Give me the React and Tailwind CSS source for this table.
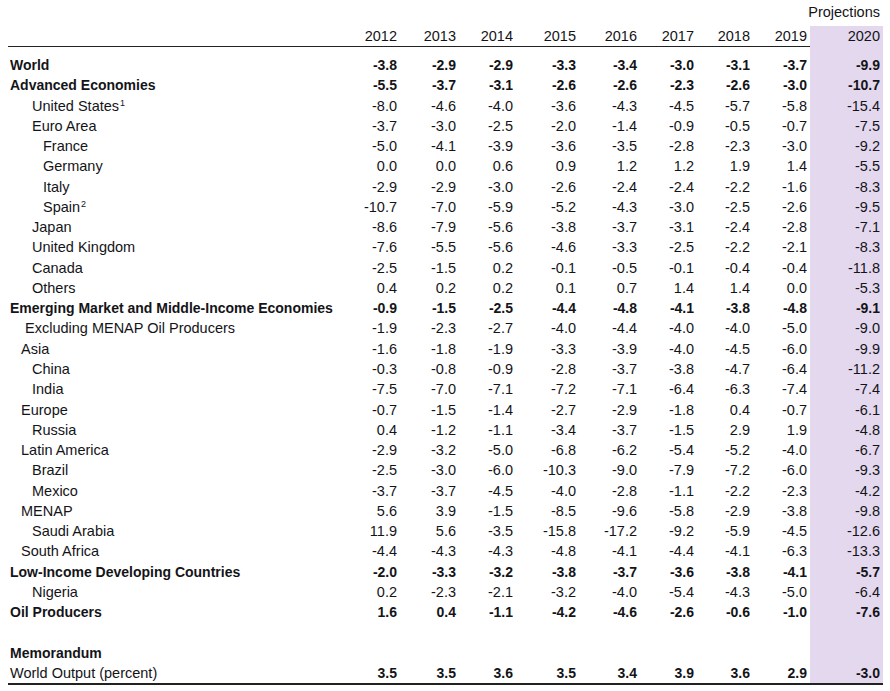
import React from "react";

const rows = [
  { label: "World", pad: "pl-[2px]", bold: true, v: ["-3.8", "-2.9", "-2.9", "-3.3", "-3.4", "-3.0", "-3.1", "-3.7", "-9.9"] },
  { label: "Advanced Economies", pad: "pl-[2px]", bold: true, v: ["-5.5", "-3.7", "-3.1", "-2.6", "-2.6", "-2.3", "-2.6", "-3.0", "-10.7"] },
  { label: "United States", sup: "1", pad: "pl-[24px]", v: ["-8.0", "-4.6", "-4.0", "-3.6", "-4.3", "-4.5", "-5.7", "-5.8", "-15.4"] },
  { label: "Euro Area", pad: "pl-[24px]", v: ["-3.7", "-3.0", "-2.5", "-2.0", "-1.4", "-0.9", "-0.5", "-0.7", "-7.5"] },
  { label: "France", pad: "pl-[35px]", v: ["-5.0", "-4.1", "-3.9", "-3.6", "-3.5", "-2.8", "-2.3", "-3.0", "-9.2"] },
  { label: "Germany", pad: "pl-[35px]", v: ["0.0", "0.0", "0.6", "0.9", "1.2", "1.2", "1.9", "1.4", "-5.5"] },
  { label: "Italy", pad: "pl-[35px]", v: ["-2.9", "-2.9", "-3.0", "-2.6", "-2.4", "-2.4", "-2.2", "-1.6", "-8.3"] },
  { label: "Spain", sup: "2", pad: "pl-[35px]", v: ["-10.7", "-7.0", "-5.9", "-5.2", "-4.3", "-3.0", "-2.5", "-2.6", "-9.5"] },
  { label: "Japan", pad: "pl-[24px]", v: ["-8.6", "-7.9", "-5.6", "-3.8", "-3.7", "-3.1", "-2.4", "-2.8", "-7.1"] },
  { label: "United Kingdom", pad: "pl-[24px]", v: ["-7.6", "-5.5", "-5.6", "-4.6", "-3.3", "-2.5", "-2.2", "-2.1", "-8.3"] },
  { label: "Canada", pad: "pl-[24px]", v: ["-2.5", "-1.5", "0.2", "-0.1", "-0.5", "-0.1", "-0.4", "-0.4", "-11.8"] },
  { label: "Others", pad: "pl-[24px]", v: ["0.4", "0.2", "0.2", "0.1", "0.7", "1.4", "1.4", "0.0", "-5.3"] },
  { label: "Emerging Market and Middle-Income Economies", pad: "pl-[2px]", bold: true, v: ["-0.9", "-1.5", "-2.5", "-4.4", "-4.8", "-4.1", "-3.8", "-4.8", "-9.1"] },
  { label: "Excluding MENAP Oil Producers", pad: "pl-[17px]", v: ["-1.9", "-2.3", "-2.7", "-4.0", "-4.4", "-4.0", "-4.0", "-5.0", "-9.0"] },
  { label: "Asia", pad: "pl-[13px]", v: ["-1.6", "-1.8", "-1.9", "-3.3", "-3.9", "-4.0", "-4.5", "-6.0", "-9.9"] },
  { label: "China", pad: "pl-[24px]", v: ["-0.3", "-0.8", "-0.9", "-2.8", "-3.7", "-3.8", "-4.7", "-6.4", "-11.2"] },
  { label: "India", pad: "pl-[24px]", v: ["-7.5", "-7.0", "-7.1", "-7.2", "-7.1", "-6.4", "-6.3", "-7.4", "-7.4"] },
  { label: "Europe", pad: "pl-[13px]", v: ["-0.7", "-1.5", "-1.4", "-2.7", "-2.9", "-1.8", "0.4", "-0.7", "-6.1"] },
  { label: "Russia", pad: "pl-[24px]", v: ["0.4", "-1.2", "-1.1", "-3.4", "-3.7", "-1.5", "2.9", "1.9", "-4.8"] },
  { label: "Latin America", pad: "pl-[13px]", v: ["-2.9", "-3.2", "-5.0", "-6.8", "-6.2", "-5.4", "-5.2", "-4.0", "-6.7"] },
  { label: "Brazil", pad: "pl-[24px]", v: ["-2.5", "-3.0", "-6.0", "-10.3", "-9.0", "-7.9", "-7.2", "-6.0", "-9.3"] },
  { label: "Mexico", pad: "pl-[24px]", v: ["-3.7", "-3.7", "-4.5", "-4.0", "-2.8", "-1.1", "-2.2", "-2.3", "-4.2"] },
  { label: "MENAP", pad: "pl-[13px]", v: ["5.6", "3.9", "-1.5", "-8.5", "-9.6", "-5.8", "-2.9", "-3.8", "-9.8"] },
  { label: "Saudi Arabia", pad: "pl-[24px]", v: ["11.9", "5.6", "-3.5", "-15.8", "-17.2", "-9.2", "-5.9", "-4.5", "-12.6"] },
  { label: "South Africa", pad: "pl-[13px]", v: ["-4.4", "-4.3", "-4.3", "-4.8", "-4.1", "-4.4", "-4.1", "-6.3", "-13.3"] },
  { label: "Low-Income Developing Countries", pad: "pl-[2px]", bold: true, v: ["-2.0", "-3.3", "-3.2", "-3.8", "-3.7", "-3.6", "-3.8", "-4.1", "-5.7"] },
  { label: "Nigeria", pad: "pl-[24px]", v: ["0.2", "-2.3", "-2.1", "-3.2", "-4.0", "-5.4", "-4.3", "-5.0", "-6.4"] },
  { label: "Oil Producers", pad: "pl-[2px]", bold: true, v: ["1.6", "0.4", "-1.1", "-4.2", "-4.6", "-2.6", "-0.6", "-1.0", "-7.6"] },
  { label: "", pad: "pl-[2px]", v: ["", "", "", "", "", "", "", "", ""] },
  { label: "Memorandum", pad: "pl-[2px]", labelBold: true, v: ["", "", "", "", "", "", "", "", ""] },
  { label: "World Output (percent)", pad: "pl-[2px]", numBold: true, v: ["3.5", "3.5", "3.6", "3.5", "3.4", "3.9", "3.6", "2.9", "-3.0"] },
];

const years = ["2012", "2013", "2014", "2015", "2016", "2017", "2018", "2019", "2020"];

const grid = "grid grid-cols-[333px_56px_59px_57px_63px_61px_57px_56px_60px_73px]";

function Row({ r }) {
  const labelBold = r.bold || r.labelBold;
  const numBold = r.bold || r.numBold;
  return (
    <div className={`${grid} h-[20.27px] leading-[20.27px]`}>
      <div className={`${r.pad} whitespace-nowrap ${labelBold ? "font-bold text-[14px]" : ""}`}>
        {r.label}
        {r.sup && <span className="text-[9px] align-top relative top-[3px] ml-[1px] leading-none">{r.sup}</span>}
      </div>
      {r.v.map((x, i) => (
        <div
          key={i}
          className={`text-right ${i === 8 ? "bg-[#e4d8ef] pr-[3px]" : i === 7 ? "pr-[3px]" : ""} ${numBold ? "font-bold text-[14px]" : ""}`}
        >
          {x}
        </div>
      ))}
    </div>
  );
}

export default function App() {
  return (
    <div className="w-[890px] h-[691px] bg-white text-[#141418] text-[14.5px] font-['Liberation_Sans',Arial,sans-serif] pl-[8px]">
      <div className="w-[875px] h-[26px] flex items-center justify-end pr-[3px]">Projections</div>
      <div className={`${grid} w-[875px] h-[21px] border-b border-[#222]`}>
        <div />
        {years.map((y, i) => (
          <div
            key={y}
            className={`text-right leading-[21px] ${i === 8 ? "bg-[#e4d8ef] pr-[3px]" : i === 7 ? "pr-[3px]" : ""}`}
          >
            {y}
          </div>
        ))}
      </div>
      <div className="w-[875px] border-b-2 border-[#222]">
        <div className={`${grid} h-[8px]`}>
          <div className="col-start-10 bg-[#e4d8ef]" />
        </div>
        {rows.map((r, i) => (
          <Row key={i} r={r} />
        ))}
      </div>
    </div>
  );
}
